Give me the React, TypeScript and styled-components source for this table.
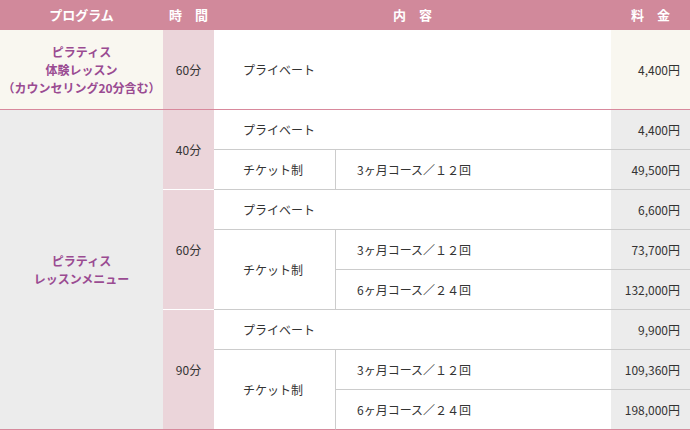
import React from "react";
import styled, { createGlobalStyle, css } from "styled-components";

const Global = createGlobalStyle`
  html, body { margin: 0; padding: 0; background: #fff; }
  body { font-family: "Noto Sans CJK JP", "Noto Sans", sans-serif; color: #333; }
`;

const PINK_LINE = "#d8899c";
const GREY_LINE = "#cccccc";

const Table = styled.table`
  width: 690px;
  table-layout: fixed;
  border-collapse: separate;
  border-spacing: 0;
  font-size: 12px;
`;

const HeadRow = styled.tr`
  height: 30px;
  background: #d1899b;
`;

const HeadCell = styled.th`
  padding: 0;
  color: #fff;
  font-size: 13px;
  font-weight: bold;
  text-align: center;
  vertical-align: middle;
  line-height: 30px;
`;

const Row = styled.tr<{ $tall?: boolean }>`
  height: ${(p) => (p.$tall ? "80px" : "40px")};
`;

type Edge = "pink" | "white" | "grey" | "none";

const edge = (e?: Edge) => {
  if (e === "pink") return css`border-bottom: 1px solid ${PINK_LINE};`;
  if (e === "white") return css`border-bottom: 1px solid #fff;`;
  if (e === "grey") return css`border-bottom: 1px solid ${GREY_LINE};`;
  return css`border-bottom: 0;`;
};

const Cell = styled.td<{ $edge?: Edge }>`
  padding: 0;
  vertical-align: middle;
  box-sizing: border-box;
  line-height: 18px;
  ${(p) => edge(p.$edge ?? "grey")}
`;

const ProgramCell = styled(Cell)<{ $tone: "cream" | "grey" }>`
  background: ${(p) => (p.$tone === "cream" ? "#f9f7f0" : "#ececec")};
  color: #9a4b92;
  font-weight: bold;
  text-align: center;
`;

const TimeCell = styled(Cell)`
  background: #ebd5da;
  text-align: center;
`;

const ItemCell = styled(Cell)`
  background: #fff;
  padding-left: 29px;
`;

const PlanCell = styled(Cell)`
  background: #fff;
  padding-left: 29px;
  border-right: 1px solid ${GREY_LINE};
`;

const CourseCell = styled(Cell)`
  background: #fff;
  padding-left: 21px;
`;

const PriceCell = styled(Cell)<{ $tone: "cream" | "grey" }>`
  background: ${(p) => (p.$tone === "cream" ? "#f9f7f0" : "#ececec")};
  text-align: right;
  padding-right: 10px;
`;

type Course = { course: string; price: string };
type Group = { time: string; privatePrice: string; courses: Course[] };

const groups: Group[] = [
  { time: "40分", privatePrice: "4,400円", courses: [{ course: "3ヶ月コース／１２回", price: "49,500円" }] },
  {
    time: "60分",
    privatePrice: "6,600円",
    courses: [
      { course: "3ヶ月コース／１２回", price: "73,700円" },
      { course: "6ヶ月コース／２４回", price: "132,000円" },
    ],
  },
  {
    time: "90分",
    privatePrice: "9,900円",
    courses: [
      { course: "3ヶ月コース／１２回", price: "109,360円" },
      { course: "6ヶ月コース／２４回", price: "198,000円" },
    ],
  },
];

export default function App() {
  const totalRows = groups.reduce((n, g) => n + 1 + g.courses.length, 0);
  return (
    <>
      <Global />
      <Table>
        <colgroup>
          <col style={{ width: 163 }} />
          <col style={{ width: 51 }} />
          <col style={{ width: 122 }} />
          <col style={{ width: 275 }} />
          <col style={{ width: 79 }} />
        </colgroup>
        <thead>
          <HeadRow>
            <HeadCell>プログラム</HeadCell>
            <HeadCell>時　間</HeadCell>
            <HeadCell colSpan={2}>内　容</HeadCell>
            <HeadCell>料　金</HeadCell>
          </HeadRow>
        </thead>
        <tbody>
          <Row $tall>
            <ProgramCell $tone="cream" $edge="pink">
              ピラティス
              <br />
              体験レッスン
              <br />
              （カウンセリング20分含む）
            </ProgramCell>
            <TimeCell $edge="pink">60分</TimeCell>
            <ItemCell colSpan={2} $edge="pink">
              プライベート
            </ItemCell>
            <PriceCell $tone="cream" $edge="pink">
              4,400円
            </PriceCell>
          </Row>
          {groups.map((g, gi) => {
            const lastGroup = gi === groups.length - 1;
            return (
              <React.Fragment key={g.time}>
                <Row>
                  {gi === 0 && (
                    <ProgramCell $tone="grey" $edge="pink" rowSpan={totalRows}>
                      ピラティス
                      <br />
                      レッスンメニュー
                    </ProgramCell>
                  )}
                  <TimeCell rowSpan={1 + g.courses.length} $edge={lastGroup ? "pink" : "white"}>
                    {g.time}
                  </TimeCell>
                  <ItemCell colSpan={2}>プライベート</ItemCell>
                  <PriceCell $tone="grey">{g.privatePrice}</PriceCell>
                </Row>
                {g.courses.map((c, ci) => {
                  const last = lastGroup && ci === g.courses.length - 1;
                  return (
                    <Row key={c.price}>
                      {ci === 0 && (
                        <PlanCell rowSpan={g.courses.length} $edge={lastGroup ? "pink" : "grey"}>
                          チケット制
                        </PlanCell>
                      )}
                      <CourseCell $edge={last ? "pink" : "grey"}>{c.course}</CourseCell>
                      <PriceCell $tone="grey" $edge={last ? "pink" : "grey"}>
                        {c.price}
                      </PriceCell>
                    </Row>
                  );
                })}
              </React.Fragment>
            );
          })}
        </tbody>
      </Table>
    </>
  );
}
